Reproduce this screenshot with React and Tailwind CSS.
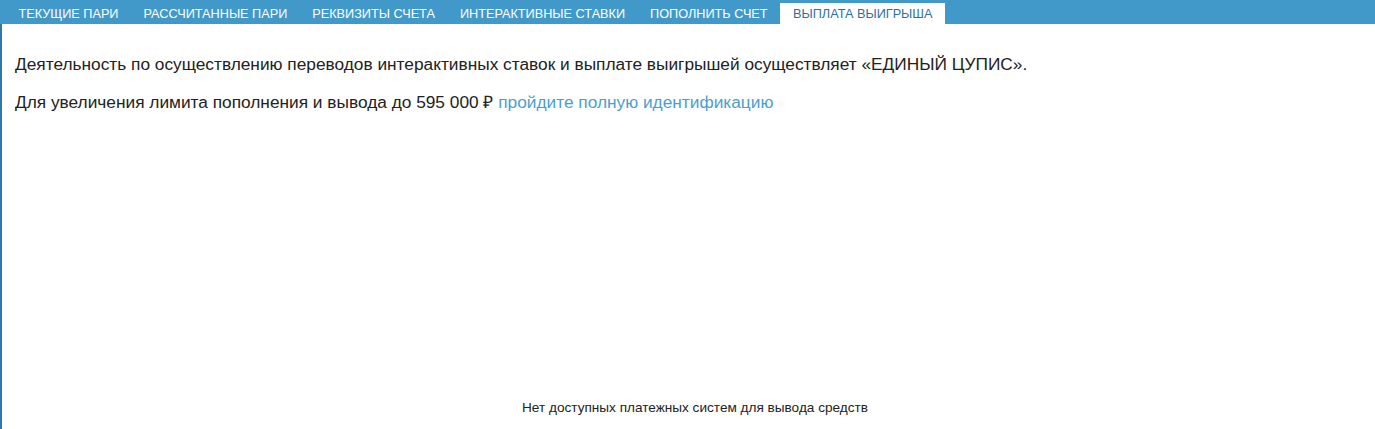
export default function App() {
  const tabs = [
    "ТЕКУЩИЕ ПАРИ",
    "РАССЧИТАННЫЕ ПАРИ",
    "РЕКВИЗИТЫ СЧЕТА",
    "ИНТЕРАКТИВНЫЕ СТАВКИ",
    "ПОПОЛНИТЬ СЧЕТ",
    "ВЫПЛАТА ВЫИГРЫША",
  ];
  const active = 5;

  return (
    <div className="h-[429px] flex flex-col bg-white font-['Liberation_Sans',Arial,sans-serif] overflow-hidden">
      <nav className="h-[24px] bg-[#4199c9] flex items-end pl-[6px]">
        {tabs.map((t, i) => (
          <div
            key={t}
            className={
              i === active
                ? "h-[21px] px-[13px] bg-white text-[#2d6fa3] text-[12.7px] leading-[21px] pt-[1px]"
                : "h-[21px] px-[12.5px] text-white text-[12.7px] leading-[21px] pt-[1px]"
            }
          >
            {t}
          </div>
        ))}
      </nav>

      <main className="flex-1 flex flex-col border-l-2 border-[#2f77ab] pl-[13px]">
        <p className="mt-[28px] text-[17.3px] leading-[24px] text-[#222]">
          Деятельность по осуществлению переводов интерактивных ставок и выплате выигрышей осуществляет «ЕДИНЫЙ ЦУПИС».
        </p>
        <p className="mt-[14px] text-[17.3px] leading-[24px] text-[#222]">
          Для увеличения лимита пополнения и вывода до 595 000 ₽{" "}
          <a className="text-[#4a9fd0] cursor-pointer">пройдите полную идентификацию</a>
        </p>

        <div className="mt-auto pb-[12px] text-center text-[13.6px] leading-[18px] text-[#222]">
          Нет доступных платежных систем для вывода средств
        </div>
      </main>
    </div>
  );
}
